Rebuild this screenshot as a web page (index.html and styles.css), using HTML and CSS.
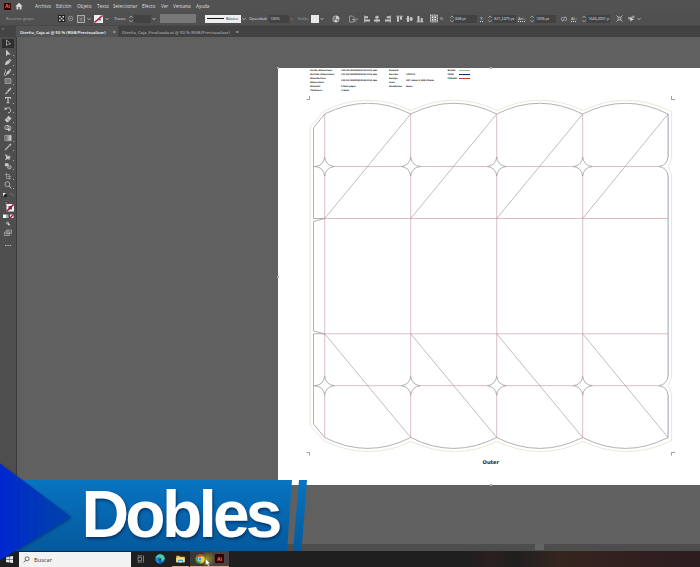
FILE: index.html
```
<!DOCTYPE html>
<html lang="es">
<head>
<meta charset="utf-8">
<title>Diseño_Caja.ai</title>
<link rel="stylesheet" href="styles.css">
</head>
<body>
<svg class="defs" width="0" height="0">
  <symbol id="chev" viewBox="0 0 4 4"><path d="M.5 1.2 2 2.7 3.5 1.2" fill="none" stroke="#ccc" stroke-width=".8"/></symbol>
  <symbol id="step" viewBox="0 0 4 8"><path d="M.5 2.7 2 1.2 3.5 2.7M.5 5.3 2 6.8 3.5 5.3" fill="none" stroke="#c4c4c4" stroke-width=".8"/></symbol>
</svg>
<div class="app">
  <nav class="menu">
    <span class="ai">Ai</span>
    <svg class="home" viewBox="0 0 8 8"><path d="M4 .8.4 4.200h1.100v3.300h1.800V5h1.400v2.500h1.800V4.200h1.100z" fill="#d8d8d8"/></svg>
    <span>Archivo</span><span>Edición</span><span>Objeto</span><span>Texto</span><span>Seleccionar</span><span>Efecto</span><span>Ver</span><span>Ventana</span><span>Ayuda</span>
  </nav>
  <div class="control">
    <span class="dim">Recortar grupo</span>
    <svg width="7" height="7" viewBox="0 0 7 7"><rect width="7" height="7" fill="#222"/><path d="M1 1h1.500v1.500H1zM4.500 1H6v1.500H4.500zM1 4.500h1.500V6H1zM4.500 4.500H6V6H4.500zM2.700 2.700h1.600v1.600H2.700z" fill="#ddd"/></svg>
    <svg width="7" height="7" viewBox="0 0 7 7"><circle cx="3.500" cy="3.500" r="2.300" fill="none" stroke="#aaa" stroke-width=".7"/><circle cx="3.500" cy="3.500" r=".8" fill="#aaa"/></svg>
    <span class="unknown">?</span>
    <svg class="ch"><use href="#chev"/></svg>
    <svg width="9" height="8" viewBox="0 0 9 8"><path d="M0 0h9v8H0z" fill="#eee"/><path d="M4.500 3.500h2.500v2H4.500" fill="#777"/><path d="M.5 7.500 8.500.5" stroke="#a5143c" stroke-width="1.500"/></svg>
    <svg class="ch"><use href="#chev"/></svg>
    <span>Trazo:</span>
    <svg class="st"><use href="#step"/></svg>
    <span class="field f17"></span>
    <svg class="ch"><use href="#chev"/></svg>
    <span class="profile"></span>
    <span class="brush"><i></i>Básico</span>
    <svg class="ch"><use href="#chev"/></svg>
    <span class="tight">Opacidad:</span>
    <span class="field f20">100%</span>
    <span>›</span>
    <span class="dim">Estilo:</span>
    <span class="swatch"></span>
    <svg class="ch"><use href="#chev"/></svg>
    <svg width="8" height="8" viewBox="0 0 8 8"><circle cx="4" cy="4" r="3.200" fill="#777" stroke="#bbb" stroke-width=".7"/><path d="M4 4V.8A3.200 3.200 0 0 1 7.200 4zM4 4 2 6.500A3.200 3.200 0 0 0 5.500 6.800z" fill="#ccc"/></svg>
    <svg width="10" height="8" viewBox="0 0 10 8"><path d="M.5 1h3l1.500 1.500V7H.5zM3 4.500h3V7" fill="none" stroke="#aaa" stroke-width=".8"/><path d="m6.500 3.500 1.200 1.200L9 3.500" fill="none" stroke="#bbb" stroke-width=".7"/></svg>
    <svg width="66" height="8" viewBox="0 0 66 8" fill="#c4c4c4"><path d="M0 .5h.8v7H0zM1 1.300h3v2H1zM1 4.500h5v2H1zM12.600.5h.8v7h-.8zM11.300 1.300h3.400v2h-3.400zM10 4.500h6v2h-6zM26 .5h.8v7H26zM22.800 1.300H26v2h-3.200zM21 4.500h5v2h-5zM32 .8h7v.8h-7zM33 1.700h2v5h-2zM36 1.700h2v3h-2zM42 3.600h7v.8h-7zM43 1h2v6h-2zM46.200 2h2v4h-2zM52.500 6.500h7v.8h-7zM53.500 1h2v5.500h-2zM56.700 3h2v3.500h-2z"/></svg>
    <svg width="8" height="9" viewBox="0 0 8 9"><rect x=".5" y="1" width="7" height="7" fill="#777" stroke="#ddd" stroke-dasharray="1 .7"/><path d="M2 2.500h1.500V4H2zM4.500 2.500H6V4H4.500zM2 5h1.500v1.500H2zM4.500 5H6v1.500H4.500z" fill="#eee"/></svg>
    <span>X:</span>
    <svg class="st"><use href="#step"/></svg>
    <span class="field f22">848 pt</span>
    <span class="u">Y:</span>
    <svg class="st"><use href="#step"/></svg>
    <span class="field f22">821,2475 pt</span>
    <span class="u">An.:</span>
    <svg class="st"><use href="#step"/></svg>
    <span class="field f21">1696 pt</span>
    <svg width="6" height="6" viewBox="0 0 6 6"><path d="M2.500 1.500H1.200a.8.8 0 0 0-.8 1v1q0 1 .8 1h1.300M3.500 1.500h1.300q.8 0 .8 1v1q0 1-.8 1H3.500M1.500 5.500l3-5" fill="none" stroke="#bbb" stroke-width=".7"/></svg>
    <span class="u">Al.:</span>
    <svg class="st"><use href="#step"/></svg>
    <span class="field f22">1646,4901 p</span>
    <svg width="7" height="7" viewBox="0 0 7 7"><path d="M.5.500 2.500 2.500M6.500.5l-2 2M.5 6.500l2-2M6.500 6.500l-2-2M2.200 2.200h2.600v2.600H2.200z" fill="none" stroke="#bbb" stroke-width=".9"/></svg>
    <svg width="7" height="7" viewBox="0 0 7 7"><path d="M0 2h3v2.500H0zM3.500.8h3v2.500h-3z" fill="#999"/><path d="m2.500 2 3.500 3H4L2.500 6.800z" fill="#ddd"/></svg>
    <svg class="ch"><use href="#chev"/></svg>
  </div>
  <div class="tabs">
    <div class="collapse">»</div>
    <div class="tab active"><span>Diseño_Caja.ai @ 50 % (RGB/Previsualizar)</span><b>×</b></div>
    <div class="tab"><span>Diseño_Caja_Finalizada.ai @ 50 % (RGB/Previsualizar)</span><b>×</b></div>
  </div>
  <main class="work">
    <aside class="tools">
      <div class="tool on"><svg viewBox="0 0 8 8"><path d="M2.500.8v5.800L4 5.200 6.700 5z" fill="none" stroke="#bbb" stroke-width=".7"/></svg></div>
      <div class="tool"><svg viewBox="0 0 8 8"><path d="M2 .5v6.700l1.700-1.600L6.700 5.500z"/></svg></div>
      <div class="tool"><svg viewBox="0 0 8 8"><path d="m.8 7.300 1-3.500L4.500 2l1.700 1.700-2 2.600zM4.800 1.600l1-.9 1.700 1.700-1 1z"/></svg></div>
      <div class="tool"><svg viewBox="0 0 8 8"><path d="m1.800 7 1-3L5 2l1.500 1.500-2 2.500zM5.300 1.600l.8-.8 1.500 1.500-.8.8z"/><path d="M.8 1.500q2 1 0 3.500t1.500 2.500" fill="none" stroke="#ccc" stroke-width=".7"/></svg></div>
      <div class="tool"><svg viewBox="0 0 8 8"><path d="M1 1.500h6v5H1z" fill="#777" stroke="#aaa" stroke-width=".7"/></svg></div>
      <div class="tool"><svg viewBox="0 0 8 8"><path d="M6.500.6 7.500 1.600 4.200 5.200 3 4zM2.700 4.400l1.200 1.200Q3 7.500.5 7.200 1.800 6.500 2.700 4.400"/></svg></div>
      <div class="tool"><svg viewBox="0 0 8 8"><path d="M1 1h6v2h-.8v-.9H4.600v4.400h.9v.7h-3v-.7h.9V2.100H1.800V3H1z"/></svg></div>
      <div class="tool"><svg viewBox="0 0 8 8"><path d="M2 2.500Q5.500.5 6.500 3.500T4 6.800" fill="none" stroke="#c4c4c4"/><path d="M.6 1v3l2.500-.8z"/></svg></div>
      <div class="tool"><svg viewBox="0 0 8 8"><path d="M4.500.8 7.500 3.500 4 7.300H2.800L.7 5z"/><path d="m2.500 3.200 2.800 2.600" stroke="#555" stroke-width=".6"/></svg></div>
      <div class="tool"><svg viewBox="0 0 8 8"><circle cx="3" cy="3.500" r="2.200" fill="none" stroke="#bbb"/><circle cx="5" cy="4" r="2" fill="none" stroke="#bbb" stroke-width=".8"/><path d="M4 3.500v4l1.200-1 2-.2z"/></svg></div>
      <div class="tool"><svg viewBox="0 0 8 8"><defs><linearGradient id="tg"><stop stop-color="#555"/><stop offset="1" stop-color="#ddd"/></linearGradient></defs><path d="M.8 1.300h6.400v5.400H.8z" fill="url(#tg)" stroke="#bbb" stroke-width=".6"/></svg></div>
      <div class="tool"><svg viewBox="0 0 8 8"><path d="m5 1.800 1.200-1.200 1.200 1.200L6.200 3z"/><path d="M5.500 2.500 1 7" stroke="#bbb" stroke-width="1.100"/></svg></div>
      <div class="tool"><svg viewBox="0 0 8 8"><path d="M1 1l2 1 .8 1.500L6.500 2 5.300 3.800l2.200.2-2.200 1L6 7 3.700 6 1 7.300 2.300 4.500z"/></svg></div>
      <div class="tool"><svg viewBox="0 0 8 8"><rect x=".8" y="1.200" width="3.800" height="3" rx="1"/><rect x="3.500" y="3.800" width="3.800" height="3" rx="1.500" fill="#777" stroke="#bbb" stroke-width=".7"/></svg></div>
      <div class="tool"><svg viewBox="0 0 8 8"><path d="M2.500.8v5.700H7M.8 2.500h4.500v5M3.500 4.500h3.500" fill="none" stroke="#aaa" stroke-width=".7"/></svg></div>
      <div class="tool"><svg viewBox="0 0 8 8"><circle cx="3.400" cy="3.200" r="2.400" fill="none" stroke="#c4c4c4" stroke-width=".8"/><path d="m5 5 2.300 2.400" stroke="#c4c4c4"/></svg></div>
      <svg class="colors" viewBox="0 0 16 60">
        <path d="M3 2h2.500v2.500H3z" fill="#eee"/><path d="M4.300 3.300h2.500v2.500H4.300z" fill="#111"/><path d="M10 3q3-1 3.500 2.500" fill="none" stroke="#888" stroke-width=".7"/>
        <path d="M3 9.500h6.500v7H3z" fill="#444" stroke="#666" stroke-width=".5"/><text x="4.800" y="14.500" font-size="5" fill="#ccc">?</text>
        <path d="M6.500 13H14v7.500H6.500z" fill="#f4eef0"/><path d="M8.500 15H12v3.500H8.500z" fill="#555"/><path d="M6.700 20.300 13.800 13.200" stroke="#a5143c" stroke-width="1.600"/>
        <path d="M3 23.500h3v3.500H3z" fill="#fff"/><path d="M6 23.500h2.500v3.500H6z" fill="#aaa"/><path d="M10 23.500h3.500v3.500H10z" fill="#eee"/><path d="m10 27 3.500-3.500" stroke="#a5143c" stroke-width="1.300"/>
        <circle cx="7.500" cy="32" r="1.600" fill="#999"/><path d="m8 31.500 2.500 2.500L8 34.500z" fill="#ccc"/>
        <path d="M4.500 41h5v3.500h-5zM6.500 39h5v3.500h-5z" fill="#666" stroke="#aaa" stroke-width=".7"/>
        <path d="M5 54.500h1.300M7.400 54.500h1.300M9.800 54.500h1.300" stroke="#ccc" stroke-width="1.200"/>
      </svg>
    </aside>
    <div class="canvas">
      <section class="artboard">
        <svg class="dieline" viewBox="278 68 422 417" width="422" height="417">
          <defs><path id="fold" d="M0-9.500Q1-1 9.500 0Q1 1 0 9.500Q-1 1-9.500 0Q-1-1 0-9.500Z"/></defs>
          <path class="bleed" d="M310.200 127 324 111.200Q345 100.200 368 100.300T411 110.600Q432 100.300 454 100.300T497 110.600Q518 100.300 540 100.300T583 110.600Q604 100.300 626 100.300T671.600 111.500V158L668.500 166.500 671.600 175V377L668.500 385.700 671.600 394V440.500Q648 451.800 626 451.500T583 441.500Q562 451.700 540 451.500T497 441.500Q476 451.700 454 451.500T411 441.500Q390 451.700 368 451.500T324 441L310.200 425.500Z"/>
          <path class="crease" d="M324.700 114V157M324.700 176V376M324.700 395V437.500M410.700 114V157M410.700 176V376M410.700 395V437.500M496.700 114V157M496.700 176V376M496.700 395V437.500M582.700 114V157M582.700 176V376M582.700 395V437.500M334 166.500H401M420 166.500H487M506 166.500H573M592 166.500H659M334 385.700H401M420 385.700H487M506 385.700H573M592 385.700H659M325 218.500H668M325 333.800H668"/>
          <path class="diag" d="M324.700 218.500 410.700 114M410.700 218.500 496.700 114M496.700 218.500 582.700 114M582.700 218.500 668 114M324.700 333.800 410.700 437.500M410.700 333.800 496.700 437.500M496.700 333.800 582.700 437.500M582.700 333.800 668 437.500"/>
          <path class="guide" d="M668.500 114V157M668.500 176V376M668.500 395V437.500"/>
          <g class="trim">
            <path d="M313.500 218.500V128L324.700 114Q367.700 92.500 410.700 114Q453.700 92.500 496.700 114Q539.700 92.500 582.700 114Q625.500 92.500 668 114V157Q667.500 165 659 166.500Q667.500 168 668 176V376Q667.500 384 659 385.700Q667.500 387 668 395V437.500Q625.500 459.300 582.700 437.500Q539.700 459.300 496.700 437.500Q453.700 459.300 410.700 437.500Q367.700 459.300 324.700 437.500L313.500 424V333.800H324.700L313.500 331V221.500L324.700 218.500H313.500M313.500 166.500H316M313.500 385.700H316"/>
            <use href="#fold" x="324.700" y="166.500"/><use href="#fold" x="410.700" y="166.500"/><use href="#fold" x="496.700" y="166.500"/><use href="#fold" x="582.700" y="166.500"/>
            <use href="#fold" x="324.700" y="385.700"/><use href="#fold" x="410.700" y="385.700"/><use href="#fold" x="496.700" y="385.700"/><use href="#fold" x="582.700" y="385.700"/>
          </g>
          <path class="marks" d="M309.500 96V99.500H306.500M671.500 96V99.500H675M309.500 455.500V452.500H306.500M671.500 455.500V452.500H675"/>
        </svg>
        <div class="specs">
          <dl><dt>Inside dimensions</dt><dd>120.0(L)X500(W)X159.5(H) mm</dd><dt>Outside dimensions</dt><dd>121.0(L)X500(W)X161.5(H) mm</dd><dt class="two">Manufacture<br>dimensions</dt><dd class="two">120.5(L)X500(W)X160.5(H) mm</dd><dt>Material</dt><dd>E flute paper</dd><dt>Thickness</dt><dd>1.5mm</dd></dl>
          <dl class="b"><dt>Remark</dt><dd></dd><dt>Box No.</dt><dd>100270</dd><dt class="two">Design<br>Area</dt><dd class="two">497.4mm X 488.39mm</dd><dt>Membrane</dt><dd>None</dd></dl>
          <dl class="c"><dt>BLEED</dt><dd class="green"></dd><dt>TRIM</dt><dd class="blue"></dd><dt>CREASE</dt><dd class="red"></dd></dl>
        </div>
        <div class="outer">Outer</div>
        <i class="h tl"></i><i class="h tc"></i><i class="h ml"></i><i class="h bc"></i>
      </section>
    </div>
  </main>
  <div class="scroll"><span></span></div>
  <footer class="taskbar">
    <svg class="win" viewBox="0 0 7 7"><path d="M0 1 3 .5v2.800H0zM3.400.4 7 0v3.300H3.400zM0 3.700h3v2.800L0 6zM3.400 3.700H7V7l-3.600-.5z" fill="#eee"/></svg>
    <div class="search"><svg viewBox="0 0 8 8"><circle cx="4.700" cy="3.200" r="2.300" fill="none" stroke="#333" stroke-width=".8"/><path d="M3 5 .8 7.300" stroke="#333" stroke-width=".9"/></svg>Buscar</div>
    <div class="cell"><svg width="8" height="8" viewBox="0 0 8 8"><path d="M1 2.300h3.500v3.400H1zM1 .3V1h3.500V.3M1 7.700V7h3.500v.7M6.500.5v7" fill="none" stroke="#aaa" stroke-width=".7"/></svg></div>
    <div class="cell"><svg width="10" height="10" viewBox="0 0 10 10"><circle cx="5" cy="5" r="4.700" fill="#178bd8"/><path d="M.5 4Q2 .3 5.300.3 9.700.8 9.700 4.500 9 7 6 6.300 7 5 5.500 3.700 3.500 2.600.5 4" fill="#48cf9f"/><path d="M4 4q-2 3 1.500 5.200 2 .3 3.500-1.500-2 .8-3.500-.2-1.400-1-.9-2.300Q5 4.400 4 4" fill="#0a4ea0"/><path d="M4.700 4.500q1.800-.3 1.300 1.800-1 .7-1.300-.2-.4-.8 0-1.600" fill="#111"/></svg></div>
    <div class="cell open folder"><svg width="9" height="8" viewBox="0 0 9 8"><path d="M.3.8h3l1 1h4.400v5.500H.3z" fill="#e9b93d"/><path d="M.3 2.700h8.400v4.600H.3z" fill="#ffe08a"/><path d="M2 4.700h5v2.600H2z" fill="#3d9fe0"/><path d="M3 6h3v1.300H3z" fill="#ffe08a"/></svg></div>
    <div class="cell open hot"><svg width="10" height="10" viewBox="0 0 10 10"><circle cx="5" cy="5" r="4.600" fill="#45a853"/><path d="M1 2.700Q2.500.4 5 .4q2.700 0 4 2.300L5 5 3 4.700z" fill="#e24335"/><path d="M9 2.700H5L7 6 5 9.600Q8.300 9.500 9.500 6.500 10 4.500 9 2.700" fill="#f8c52a"/><circle cx="5" cy="5" r="2.200" fill="#fff"/><circle cx="5" cy="5" r="1.700" fill="#4385ee"/></svg></div>
    <div class="cell open current"><span class="ai">Ai</span></div>
  </footer>
</div>
<div class="caption">
  <svg viewBox="0 460 310 105" width="310" height="105">
    <defs>
      <linearGradient id="band" x1="0" y1="0" x2="0" y2="1"><stop stop-color="#0874c2"/><stop offset="1" stop-color="#05599c"/></linearGradient>
      <linearGradient id="arrow"><stop stop-color="#0527cf"/><stop offset="1" stop-color="#0645a7"/></linearGradient>
      <filter id="shade" x="-10%" y="-10%" width="130%" height="130%"><feDropShadow dx="0" dy="1" stdDeviation="1.800" flood-color="#012b55" flood-opacity=".75"/></filter>
    </defs>
    <path d="M0 480H292L287 551H0Z" fill="url(#band)"/>
    <path d="M299 480H307L301.500 551H293Z" fill="url(#band)"/>
    <path d="M0 463.500 71.500 517 0 560Z" fill="url(#arrow)" filter="url(#shade)"/>
  </svg>
  <strong>Dobles</strong>
</div>
<div class="glow"></div>
<svg class="pointer" viewBox="0 0 6 9"><path d="M.5.5v6.700L2 5.800l1.200 2.700 1.200-.6L3.300 5.400h2z" fill="#fff" stroke="#555" stroke-width=".4"/></svg>
</body>
</html>
```
FILE: styles.css
```
* { box-sizing: border-box; }
body { margin: 0; width: 700px; height: 567px; overflow: hidden; position: relative; background: #606060; font-family: "Open Sans", "Noto Sans", sans-serif; font-size: 5px; color: #dedede; }
svg { display: block; overflow: visible; }
.defs { position: absolute; }
.app { display: flex; flex-direction: column; height: 567px; }
.ai { display: flex; align-items: center; justify-content: center; width: 7px; height: 7px; background: #330000; color: #ff7b4e; font: bold 5px "Liberation Sans", sans-serif; border-radius: 1px; }

.menu { height: 12px; background: #525252; display: grid; grid-template-columns: 11px 20px 21px 21px 20px 16px 29px 19px 12px 23px auto; align-items: center; padding-left: 4px; font-size: 4.700px; letter-spacing: -.06px; white-space: nowrap; }
.menu .home { width: 8px; height: 8px; }

.control { height: 14px; background: #505050; border-bottom: 1px solid #484848; padding-left: 6px; display: grid; align-items: center; white-space: nowrap; font-size: 4.300px; line-height: 7px;
  grid-template-columns: 52px 9px 10px 10px 7px 11px 9px 15px 5px 18px 8px 45px 36px 8px 20px 22px 7px 13px 9px 12px 17px 15px 66px 10px 10px 4px 26px 8px 5px 25px 12px 5px 26px 10px 11px 5px 29px 12px 9px 6px; }
.control .dim { color: #aaa; font-size: 4px; }
.control .u { text-decoration: underline dotted; }
.control .tight { font-size: 4px; letter-spacing: -.1px; }
.ch { width: 4px; height: 4px; }
.st { width: 4px; height: 8px; }
.unknown { width: 8px; height: 8px; border: 1px solid #aaa; background: #606060; text-align: center; line-height: 6px; }
.field { height: 8px; background: #424242; padding-left: 1px; line-height: 8px; font-size: 4px; letter-spacing: -.15px; }
.f17 { width: 17px; } .f20 { width: 20px; } .f21 { width: 21px; } .f22 { width: 23px; }
.profile { width: 36px; height: 9px; background: #777; }
.brush { width: 36px; height: 8px; background: #eee; color: #222; display: flex; align-items: center; gap: 2px; padding-left: 2px; font-size: 4px; }
.brush i { width: 17px; height: 1px; background: #111; }
.brush + .ch { margin-left: 1px; }
.swatch { width: 8px; height: 8px; background: #e8e8e8; }

.tabs { height: 11px; background: #424242; display: flex; line-height: 10px; font-size: 4.250px; font-weight: 600; white-space: nowrap; }
.collapse { width: 16px; padding-left: 2px; line-height: 4px; background: #444; color: #aaa; }
.tab { display: flex; align-items: center; justify-content: space-between; width: 123px; padding: 0 2px 0 4px; color: #a2a2a2; }
.tab.active { width: 102px; background: #535353; color: #fff; }
.tab b { font-size: 6px; font-weight: 400; color: #ccc; }

.work { flex: 1; display: flex; min-height: 0; }
.tools { width: 17px; padding-top: 1.500px; background: #4e4e4e; border-right: 1px solid #3a3a3a; display: flex; flex-direction: column; }
.tool { height: 9.470px; display: flex; align-items: center; justify-content: center; flex: none; position: relative; }
.tool svg { width: 8px; height: 8px; fill: #c8c8c8; }
.tool.on { background: #2e2e2e; margin: 0 2px; }
.tool:not(.on)::after { content: ""; position: absolute; right: 2.500px; bottom: 1px; width: 1px; height: 1px; background: #aaa; }
.colors { width: 16px; height: 60px; margin-top: .8px; }
.canvas { flex: 1; background: #606060; padding: 31px 0 0 261px; }
.artboard { position: relative; width: 422px; height: 417px; background: #fff; color: #222; }
.dieline { position: absolute; left: 0; top: 0; fill: none; stroke-width: .7; }
.bleed { stroke: #dbe0c8; }
.crease { stroke: #cba3ab; }
.diag { stroke: #a89da4; }
.guide { stroke: #d3d5e6; }
.trim { stroke: #8f8f98; }
.marks { stroke: #777; }
.specs { display: flex; padding: .6px 0 0 32px; font: bold 2.200px/4.100px "DejaVu Sans", sans-serif; white-space: nowrap; }
.specs dl { margin: 0; width: 79px; display: grid; grid-template-columns: 31px auto; grid-auto-rows: 4.100px; align-content: start; }
.specs dl:first-child dd { letter-spacing: -.1px; }
.specs .b { width: 58.500px; grid-template-columns: 17px auto; }
.specs .c { width: 24px; grid-template-columns: 11px 11px; }
.specs dt, .specs dd { margin: 0; }
.specs .two { grid-row: span 2; line-height: 3.800px; align-self: center; }
.specs .c dd { height: 1.300px; align-self: center; }
.green { background: #8dc978; } .blue { background: #252a80; } .red { background: #c93645; }
.outer { position: absolute; left: 204.500px; top: 391px; font: bold 5.200px/7px "DejaVu Sans", sans-serif; }
.h { position: absolute; width: 2px; height: 2px; background: #fff; border: .5px solid #aaa; }
.tl { left: -1px; top: -1px; } .tc { left: 212px; top: -1px; } .ml { left: -1px; top: 208px; } .bc { left: 212px; top: 416px; }

.scroll { height: 7px; background: #4d4d4d; padding-left: 535px; }
.scroll span { display: block; width: 9px; height: 6px; background: #646464; }
.taskbar { height: 16px; background: linear-gradient(90deg, #201f1f 0 470px, #2b1f1f 490px, #1f1f1f 515px, #35261f 560px, #33211f 610px, #2c1c20); display: flex; align-items: center; }
.win { width: 7px; height: 7px; margin: 0 6px; }
.search { width: 112px; height: 15px; align-self: flex-end; background: #f2f2f2; color: #333; display: flex; align-items: center; gap: 4px; padding-left: 4px; font-size: 5.700px; }
.search svg { width: 7px; height: 7px; }
.cell { width: 19.500px; height: 16px; display: flex; align-items: center; justify-content: center; }
.open { border-bottom: 1px solid #e3a08b; }
.folder { width: 17px; margin: 0 1.500px; }
.hot { width: 20px; background: #3b3836; } .current { width: 19px; background: #484444; }
.current .ai { width: 9px; height: 9px; }

.caption { position: absolute; left: 0; top: 460px; width: 310px; height: 105px; }
.caption strong { position: absolute; left: 81.500px; top: 16px; font: bold 66px/76px "Liberation Sans", sans-serif; letter-spacing: -3.800px; color: #fff; text-shadow: 1px 2px 3px rgba(0, 35, 80, .7); }
.glow { position: absolute; left: 199px; top: 551px; width: 16px; height: 16px; border-radius: 50%; background: radial-gradient(rgba(255, 235, 0, .5), rgba(255, 235, 0, 0) 70%); }
.pointer { position: absolute; left: 204.500px; top: 558px; width: 6px; height: 9px; }
```
